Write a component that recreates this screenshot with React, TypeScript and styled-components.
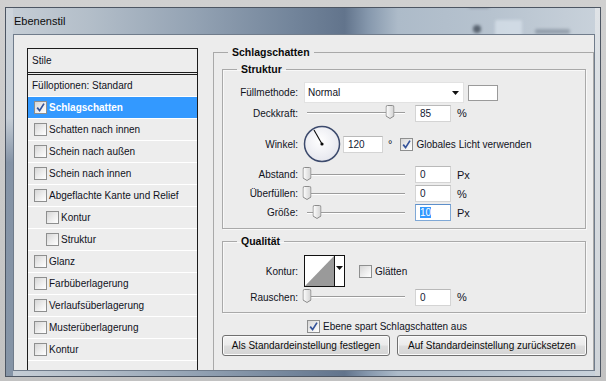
import React from 'react'
import styled, { createGlobalStyle } from 'styled-components'

const GlobalStyle = createGlobalStyle`
  html, body { margin: 0; padding: 0; }
  body {
    width: 606px;
    height: 381px;
    overflow: hidden;
    font-family: "Liberation Sans", Arial, sans-serif;
    font-size: 10px;
    color: #10121c;
  }
`

const Screen = styled.div`
  width: 606px;
  height: 381px;
  box-sizing: border-box;
  padding: 7px 5px 4px 5px;
  background: linear-gradient(#d0d0d0, #c2c2c2);
`

const Window = styled.div`
  position: relative;
  height: 370px;
  box-sizing: border-box;
  border: 1px solid #4d5663;
  padding: 0 5px 5px 7px;
  display: flex;
  flex-direction: column;
  background:
    linear-gradient(180deg, rgba(255,255,255,0.15) 0%, rgba(120,140,165,0.0) 30%, rgba(80,100,128,0.55) 42%, rgba(90,110,135,0.6) 100%) left top / 7px 100% no-repeat,
    linear-gradient(180deg, #dfe3e7, #cfd4d9) right top / 5px 100% no-repeat,
    linear-gradient(90deg, #c6ced6 0%, #b3bec9 14%, #93a2b3 32%, #73859b 48%, #62748c 57%, #8698ad 61%, #adbbc9 66%, #b7c3cf 82%, #c9d2db 100%);
`

const TitleBar = styled.div`
  position: relative;
  height: 26px;
  display: flex;
  align-items: center;
  padding-left: 1px;
  font-size: 11px;
  color: #0c0c0c;
  overflow: hidden;
`

const Blur = styled.span<{ $x: number; $y: number; $w: number; $h: number; $c: string; $r?: number }>`
  position: absolute;
  left: ${p => p.$x}px;
  top: ${p => p.$y}px;
  width: ${p => p.$w}px;
  height: ${p => p.$h}px;
  background: ${p => p.$c};
  border-radius: ${p => p.$r ?? 2}px;
  filter: blur(1.5px);
`

const Content = styled.div`
  flex: 1;
  box-sizing: border-box;
  border: 1px solid #707c8b;
  background: #ececec;
  display: flex;
  align-items: stretch;
  gap: 15px;
  padding: 11px 0 0 13px;
  min-height: 0;
`

const StyleList = styled.div`
  width: 171px;
  margin-top: 2px;
  box-sizing: border-box;
  border: 1px solid #1c1c1c;
  border-bottom: none;
  background: #ededed;
  display: flex;
  flex-direction: column;
`

const ListHead = styled.div`
  height: 23px;
  line-height: 23px;
  padding-left: 4px;
  border-bottom: 3px double #1c1c1c;
`

const Item = styled.div<{ $indent?: boolean; $selected?: boolean; $plain?: boolean }>`
  height: 21px;
  border-bottom: 1px solid #ffffff;
  display: flex;
  align-items: center;
  gap: 2px;
  padding-left: ${p => (p.$plain ? 4 : p.$indent ? 18 : 6)}px;
  background: ${p => (p.$selected ? '#3399ff' : 'transparent')};
  color: ${p => (p.$selected ? '#ffffff' : '#10121c')};
  font-weight: ${p => (p.$selected ? 'bold' : 'normal')};
  white-space: nowrap;
`

const Box = styled.span`
  width: 13px;
  height: 13px;
  flex: none;
  box-sizing: border-box;
  border: 1px solid #8e8f8f;
  background: linear-gradient(135deg, #d6d6d6 0%, #eeeeee 55%, #ffffff 100%);
  display: inline-flex;
  align-items: center;
  justify-content: center;
`

const Group = styled.fieldset<{ $open?: boolean }>`
  margin: 0;
  min-width: 0;
  box-sizing: border-box;
  border: 1px solid #a9a9a9;
  border-bottom: ${p => (p.$open ? 'none' : '1px solid #a9a9a9')};
  box-shadow: ${p => (p.$open ? 'none' : 'inset 1px 1px 0 #f8f8f8, 1px 1px 0 #f8f8f8')};
`

const Outer = styled(Group)`
  width: 381px;
  padding: 0 7px 0 8px;
  display: flex;
  flex-direction: column;
`

const Inner = styled(Group)<{ $gap?: number }>`
  padding: 6px 0 6px 0;
  margin-top: ${p => p.$gap ?? 0}px;
`

const Legend = styled.legend<{ $shift: number }>`
  margin-left: ${p => p.$shift}px;
  padding: 0 4px;
  font-weight: bold;
  font-size: 10.5px;
  line-height: 13px;
  color: #0a0a0a;
`

const Row = styled.div<{ $h: number; $top?: number }>`
  height: ${p => p.$h}px;
  margin-top: ${p => p.$top ?? 0}px;
  display: flex;
  align-items: center;
`

const Label = styled.span`
  width: 75px;
  margin-right: 6px;
  text-align: right;
  white-space: nowrap;
`

const Select = styled.div`
  width: 160px;
  height: 21px;
  box-sizing: border-box;
  background: #ffffff;
  border: 1px solid #e2e2e2;
  display: flex;
  align-items: center;
  justify-content: space-between;
  padding: 0 4px 0 3px;
`

const Swatch = styled.div`
  width: 30px;
  height: 16px;
  margin-left: 4px;
  box-sizing: border-box;
  border: 1px solid #9a9a9a;
  background: #ffffff;
`

const SliderBox = styled.div`
  width: 104px;
  height: 16px;
  box-sizing: border-box;
  padding: 0 3px;
  display: flex;
  align-items: center;
`

const Rail = styled.div`
  flex: 1;
  position: relative;
  height: 0;
  border-top: 1px solid #9c9c9c;
  border-bottom: 1px solid #ffffff;
`

const Thumb = styled.svg`
  position: absolute;
  top: -8px;
  transform: translateX(-50%);
`

const Field = styled.div<{ $w?: number; $left?: number; $focus?: boolean }>`
  width: ${p => p.$w ?? 36}px;
  height: 17px;
  margin-left: ${p => p.$left ?? 7}px;
  box-sizing: border-box;
  background: #ffffff;
  border: 1px solid ${p => (p.$focus ? '#7fa8d6' : '#d4d4d4')};
  border-top-color: ${p => (p.$focus ? '#5d8fca' : '#b9b9b9')};
  padding-left: 4px;
  line-height: 15px;
  color: #141a33;
`

const Marked = styled.span`
  background: #3399ff;
  color: #ffffff;
`

const Unit = styled.span<{ $left?: number }>`
  margin-left: ${p => p.$left ?? 6}px;
  font-size: 11px;
`

const CheckLabel = styled.label<{ $left?: number }>`
  display: flex;
  align-items: center;
  gap: 3px;
  margin-left: ${p => p.$left ?? 0}px;
  white-space: nowrap;
`

const Preview = styled.div`
  display: flex;
  height: 30px;
  border: 1px solid #111111;
  background: #ffffff;
`

const PreviewDrop = styled.div`
  width: 10px;
  border-left: 1px solid #111111;
  display: flex;
  justify-content: center;
  padding-top: 10px;
  box-sizing: border-box;
`

const Buttons = styled.div`
  display: flex;
  gap: 7px;
  margin: 2px -2px 0 0;
`

const Button = styled.button<{ $w: number }>`
  width: ${p => p.$w}px;
  height: 21px;
  padding: 0;
  font-family: "Liberation Sans", Arial, sans-serif;
  font-size: 10px;
  color: #0c0c0c;
  border: 1px solid #707070;
  border-radius: 3px;
  background: linear-gradient(#f3f3f3 0%, #ebebeb 48%, #dedede 52%, #d4d4d4 100%);
  box-shadow: inset 0 0 0 1px #fbfbfb;
`

const Arrow = () => (
  <svg width="7" height="4" viewBox="0 0 7 4">
    <path d="M0 0 H7 L3.5 4 Z" fill="#111" />
  </svg>
)

const Check = ({ checked }: { checked?: boolean }) => (
  <Box>
    {checked && (
      <svg width="11" height="11" viewBox="0 0 11 11">
        <path d="M2.2 5.6 L4.6 8.6 L9 1.6" fill="none" stroke="#34539a" strokeWidth="1.7" />
      </svg>
    )}
  </Box>
)

const Slider = ({ value }: { value: number }) => (
  <SliderBox>
    <Rail>
      <Thumb width="9" height="14" viewBox="0 0 9 14" style={{ left: `${value}%` }}>
        <defs>
          <linearGradient id="th" x1="0" x2="1">
            <stop offset="0" stopColor="#ffffff" />
            <stop offset="1" stopColor="#d2d2d2" />
          </linearGradient>
        </defs>
        <path d="M2 0.5 H7 Q8.5 0.5 8.5 2 V11 L4.5 13.5 L0.5 11 V2 Q0.5 0.5 2 0.5 Z" fill="url(#th)" stroke="#8b8b8b" />
      </Thumb>
    </Rail>
  </SliderBox>
)

const Dial = () => (
  <svg width="38" height="38" viewBox="0 0 38 38" style={{ marginLeft: -1 }}>
    <defs>
      <radialGradient id="dg" cx="0.45" cy="0.4" r="0.6">
        <stop offset="0" stopColor="#ffffff" />
        <stop offset="1" stopColor="#e6e7ee" />
      </radialGradient>
    </defs>
    <circle cx="19" cy="19" r="17.5" fill="url(#dg)" stroke="#3d4b6d" strokeWidth="1.5" />
    <line x1="19" y1="19" x2="11" y2="5" stroke="#0a0a0a" strokeWidth="1.1" />
    <circle cx="19" cy="19" r="1.6" fill="#0a0a0a" />
  </svg>
)

const styles = [
  { name: 'Schatten nach innen' },
  { name: 'Schein nach außen' },
  { name: 'Schein nach innen' },
  { name: 'Abgeflachte Kante und Relief' },
  { name: 'Kontur', indent: true },
  { name: 'Struktur', indent: true },
  { name: 'Glanz' },
  { name: 'Farbüberlagerung' },
  { name: 'Verlaufsüberlagerung' },
  { name: 'Musterüberlagerung' },
  { name: 'Kontur' },
]

export default function App() {
  return (
    <Screen>
      <GlobalStyle />
      <Window>
        <TitleBar>
          <Blur $x={455} $y={-6} $w={22} $h={6} $c="rgba(70,80,95,0.45)" $r={4} />
          <Blur $x={460} $y={17} $w={8} $h={8} $c="rgba(50,60,72,0.7)" $r={4} />
          <Blur $x={482} $y={12} $w={27} $h={20} $c="rgba(215,224,233,0.75)" />
          <Blur $x={522} $y={21} $w={35} $h={5} $c="rgba(95,108,125,0.45)" />
          <span style={{ position: 'relative' }}>Ebenenstil</span>
        </TitleBar>
        <Content>
          <StyleList>
            <ListHead>Stile</ListHead>
            <Item $plain>Fülloptionen: Standard</Item>
            <Item $selected>
              <Check checked />
              <span>Schlagschatten</span>
            </Item>
            {styles.map((s, i) => (
              <Item key={i} $indent={s.indent}>
                <Check />
                <span>{s.name}</span>
              </Item>
            ))}
          </StyleList>

          <Outer $open>
            <Legend $shift={6}>Schlagschatten</Legend>
            <Inner $gap={4}>
              <Legend $shift={14}>Struktur</Legend>
              <Row $h={21}>
                <Label>Füllmethode:</Label>
                <Select>
                  <span>Normal</span>
                  <Arrow />
                </Select>
                <Swatch />
              </Row>
              <Row $h={18} $top={1}>
                <Label>Deckkraft:</Label>
                <Slider value={85} />
                <Field>85</Field>
                <Unit>%</Unit>
              </Row>
              <Row $h={40} $top={2}>
                <Label>Winkel:</Label>
                <Dial />
                <Field $w={40} $left={2}>120</Field>
                <Unit $left={5}>°</Unit>
                <CheckLabel $left={8}>
                  <Check checked />
                  <span>Globales Licht verwenden</span>
                </CheckLabel>
              </Row>
              <Row $h={19} $top={1}>
                <Label>Abstand:</Label>
                <Slider value={0} />
                <Field>0</Field>
                <Unit>Px</Unit>
              </Row>
              <Row $h={19}>
                <Label>Überfüllen:</Label>
                <Slider value={0} />
                <Field>0</Field>
                <Unit>%</Unit>
              </Row>
              <Row $h={19}>
                <Label>Größe:</Label>
                <Slider value={10} />
                <Field $focus>
                  <Marked>10</Marked>
                </Field>
                <Unit>Px</Unit>
              </Row>
            </Inner>

            <Inner $gap={6}>
              <Legend $shift={14}>Qualität</Legend>
              <Row $h={30} $top={2}>
                <Label>Kontur:</Label>
                <Preview>
                  <svg width="29" height="30" viewBox="0 0 29 30">
                    <path d="M0 30 L29 0 V30 Z" fill="#9a9a9a" />
                  </svg>
                  <PreviewDrop>
                    <Arrow />
                  </PreviewDrop>
                </Preview>
                <CheckLabel $left={14}>
                  <Check />
                  <span>Glätten</span>
                </CheckLabel>
              </Row>
              <Row $h={18} $top={2}>
                <Label>Rauschen:</Label>
                <Slider value={0} />
                <Field>0</Field>
                <Unit>%</Unit>
              </Row>
            </Inner>

            <Row $h={14} $top={6}>
              <CheckLabel $left={85}>
                <Check checked />
                <span>Ebene spart Schlagschatten aus</span>
              </CheckLabel>
            </Row>
            <Buttons>
              <Button $w={168}>Als Standardeinstellung festlegen</Button>
              <Button $w={190}>Auf Standardeinstellung zurücksetzen</Button>
            </Buttons>
          </Outer>
        </Content>
      </Window>
    </Screen>
  )
}
